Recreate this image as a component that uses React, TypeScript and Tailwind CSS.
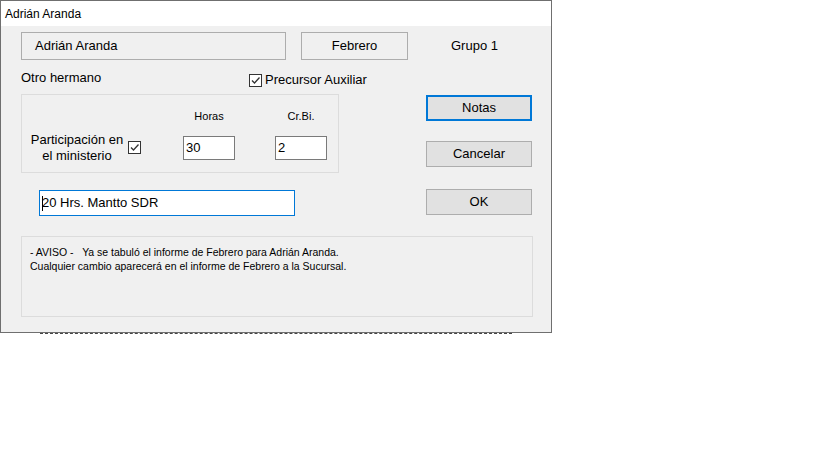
import React from "react";

function Check() {
  return (
    <span className="flex h-[13px] w-[13px] shrink-0 items-center justify-center border border-[#333] bg-white">
      <svg width="11" height="11" viewBox="0 0 11 11">
        <path d="M2 5.5 L4.5 8 L9.5 2.5" fill="none" stroke="#333" strokeWidth="1.3" />
      </svg>
    </span>
  );
}

function Btn({ label, focus }: { label: string; focus?: boolean }) {
  return (
    <div
      className={
        focus
          ? "flex h-[26px] w-[106px] items-center justify-center border-2 border-[#0078d7] bg-[#e1e1e1] text-[13px]"
          : "flex h-[26px] w-[106px] items-center justify-center border border-[#adadad] bg-[#e1e1e1] text-[13px]"
      }
    >
      {label}
    </div>
  );
}

export default function App() {
  return (
    <div className="min-h-screen bg-white font-['Liberation_Sans',Arial,sans-serif] text-black">
      <div className="flex h-[333px] w-[552px] flex-col border border-[#6f6f6f] bg-[#f0f0f0]">
        {/* barra de título */}
        <div className="flex h-[25px] items-center bg-white pl-[4px] text-[12px]">Adrián Aranda</div>

        {/* nombre / mes / grupo */}
        <div className="mt-[6px] flex h-[28px] items-center pl-[20px] text-[13px]">
          <div className="flex h-[28px] w-[265px] items-center border border-[#adadad] pl-[13px]">Adrián Aranda</div>
          <div className="ml-[15px] flex h-[28px] w-[107px] items-center justify-center border border-[#adadad]">Febrero</div>
          <div className="ml-[43px]">Grupo 1</div>
        </div>

        <div className="flex h-[34px] items-center pl-[20px] pt-[2px] text-[13px]">
          <span className="w-[228px]">Otro hermano</span>
          <label className="mt-[4px] flex items-center gap-[3px]">
            <Check />
            <span>Precursor Auxiliar</span>
          </label>
        </div>

        <div className="flex pl-[20px]">
          <div className="flex flex-col">
            {/* grupo participación */}
            <div className="flex h-[79px] w-[318px] items-start border border-[#dcdcdc]">
              <div className="ml-[5px] mt-[37px] w-[100px] text-center text-[13px] leading-[16px]">
                Participación en
                <br />
                el ministerio
              </div>
              <div className="ml-[1px] mt-[46px]">
                <Check />
              </div>
              <div className="ml-[42px] mt-[15px] flex flex-col items-center">
                <span className="text-[11px] leading-[13px]">Horas</span>
                <div className="mt-[13px] flex h-[24px] w-[52px] items-center border border-[#7a7a7a] bg-white pl-[2px] text-[13px]">30</div>
              </div>
              <div className="ml-[40px] mt-[15px] flex flex-col items-center">
                <span className="text-[11px] leading-[13px]">Cr.Bi.</span>
                <div className="mt-[13px] flex h-[24px] w-[52px] items-center border border-[#7a7a7a] bg-white pl-[2px] text-[13px]">2</div>
              </div>
            </div>
            <div className="ml-[18px] mt-[17px] flex h-[26px] w-[256px] items-center border border-[#0078d7] bg-white pl-[2px] text-[13px]">
              <span className="mr-[-1px] h-[15px] w-px bg-black" />
              20 Hrs. Mantto SDR
            </div>
          </div>

          <div className="ml-[87px] mt-px flex flex-col gap-[20px]">
            <Btn label="Notas" focus />
            <Btn label="Cancelar" />
            <div className="mt-[2px]">
              <Btn label="OK" />
            </div>
          </div>
        </div>

        {/* aviso */}
        <div className="ml-[20px] mt-[20px] h-[81px] w-[512px] border border-[#dcdcdc] pl-[8px] pt-[8px] text-[10.5px] leading-[14px]">
          <div>- AVISO -&nbsp;&nbsp; Ya se tabuló el informe de Febrero para Adrián Aranda.</div>
          <div>Cualquier cambio aparecerá en el informe de Febrero a la Sucursal.</div>
        </div>
      </div>
      <div className="ml-[40px] h-px w-[472px] border-t border-dashed border-[#444]" />
    </div>
  );
}
